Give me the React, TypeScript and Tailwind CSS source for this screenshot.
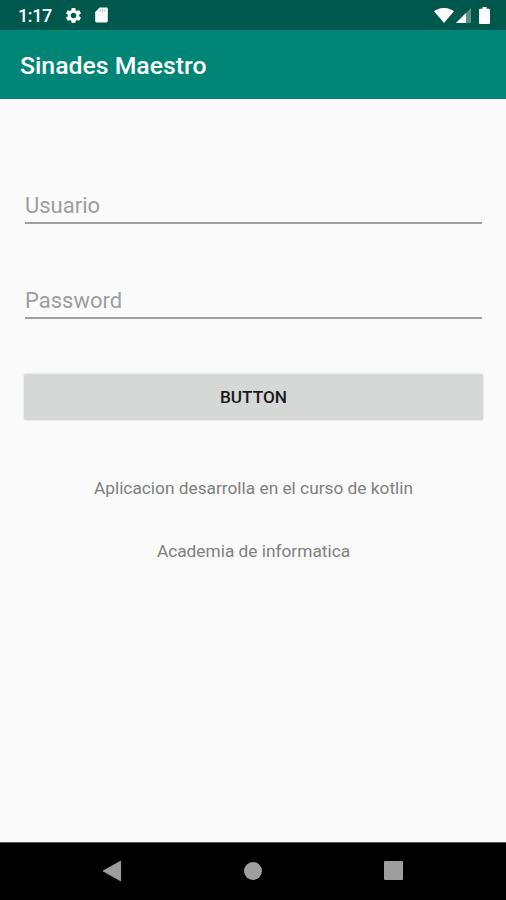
import React, { ChangeEvent, useState } from "react";
import { MdSettings } from "react-icons/md";

function StatusBar() {
  return (
    <div className="flex h-[30px] items-center justify-between bg-[#00574b] pl-[18px] pr-4 text-white">
      <div className="flex items-center">
        <span className="w-[46px] text-[18px] leading-[30px] font-medium tracking-[-0.4px] pt-[2px]">
          1:17
        </span>
        <MdSettings className="mt-px h-[19px] w-[19px]" />
        <svg viewBox="0 0 14 16" className="ml-[12px] h-[16px] w-[13px]">
          <path
            d="M5 0h7.2A1.6 1.6 0 0 1 13.800 1.600V14.400A1.600 1.600 0 0 1 12.200 16H1.800A1.600 1.600 0 0 1 .2 14.400V4.800z"
            fill="#ffffff"
          />
          <path d="M5.600 2v2.500M8.200 2v2.500M10.800 2v2.500" stroke="#8fb5ae" strokeWidth="1" />
        </svg>
      </div>
      <div className="flex items-center">
        <svg viewBox="0 0 20 15" className="h-[15px] w-[20px]">
          <path d="M0 3.200C5.600-1.100 14.400-1.100 20 3.200L10 15z" fill="#ffffff" />
        </svg>
        <svg viewBox="0 0 15 15" className="ml-[2px] mt-px h-[15px] w-[15px]">
          <path d="M0 15L15 0V15z" fill="#ffffff" fillOpacity="0.35" />
          <path d="M0 15L10 5V15z" fill="#ffffff" />
        </svg>
        <svg viewBox="0 0 11 17" className="ml-[8px] h-[17px] w-[11px]">
          <path
            d="M3.500 0h4v1.800H10a1 1 0 0 1 1 1V16a1 1 0 0 1-1 1H1a1 1 0 0 1-1-1V2.800a1 1 0 0 1 1-1h2.500z"
            fill="#ffffff"
          />
        </svg>
      </div>
    </div>
  );
}

function NavigationBar() {
  return (
    <nav className="flex h-[58px] items-center justify-between border-t border-[#555555] bg-black pb-[2px] pl-[102px] pr-[103px]">
      <button type="button" aria-label="Atrás">
        <svg viewBox="0 0 20 22" className="h-[22px] w-[20px]">
          <path d="M1.200 11L18.600 1.200V20.800z" fill="#9e9e9e" stroke="#9e9e9e" strokeLinejoin="round" />
        </svg>
      </button>
      <button
        type="button"
        aria-label="Inicio"
        className="h-[18px] w-[18px] rounded-full bg-[#9e9e9e]"
      />
      <button
        type="button"
        aria-label="Recientes"
        className="h-[19px] w-[19px] rounded-[1px] bg-[#9e9e9e]"
      />
    </nav>
  );
}

function App() {
  const [login, setLogin] = useState({ usuario: "", password: "" });

  function atualizarLogin(e: ChangeEvent<HTMLInputElement>) {
    setLogin({
      ...login,
      [e.target.name]: e.target.value,
    });
  }

  return (
    <div className="flex h-screen flex-col bg-[#fafafa] font-['Roboto',sans-serif]">
      <StatusBar />
      <header className="flex h-[69px] items-center bg-[#008577] pl-5 pt-[3px]">
        <h1 className="text-[24.8px] leading-8 font-medium text-white">Sinades Maestro</h1>
      </header>

      <form
        className="flex flex-1 flex-col pl-6 pr-[23px] pt-[86px]"
        onSubmit={(e) => e.preventDefault()}
      >
        <input
          value={login.usuario}
          onChange={atualizarLogin}
          type="text"
          name="usuario"
          placeholder="Usuario"
          className="mx-px h-[39px] border-b-2 border-[#a0a0a0] pt-[3px] text-[22px] outline-none placeholder:text-[#9e9e9e]"
        />
        <input
          value={login.password}
          onChange={atualizarLogin}
          type="password"
          name="password"
          placeholder="Password"
          className="mx-px mt-[56px] h-[39px] border-b-2 border-[#a0a0a0] pt-[3px] text-[22px] outline-none placeholder:text-[#9e9e9e]"
        />
        <button
          type="submit"
          className="mt-[55px] h-[46px] rounded-[2px] bg-[#d6d7d7] pt-[2px] text-[17.2px] font-medium text-[#1a1a1a] shadow-[0_0_2px_rgba(0,0,0,0.2)]"
        >
          BUTTON
        </button>
        <p className="mt-[58px] text-center text-[17.3px] leading-5 text-[#808080]">
          Aplicacion desarrolla en el curso de kotlin
        </p>
        <p className="mt-[43px] text-center text-[17.3px] leading-5 text-[#808080]">
          Academia de informatica
        </p>
      </form>

      <NavigationBar />
    </div>
  );
}

export default App;
